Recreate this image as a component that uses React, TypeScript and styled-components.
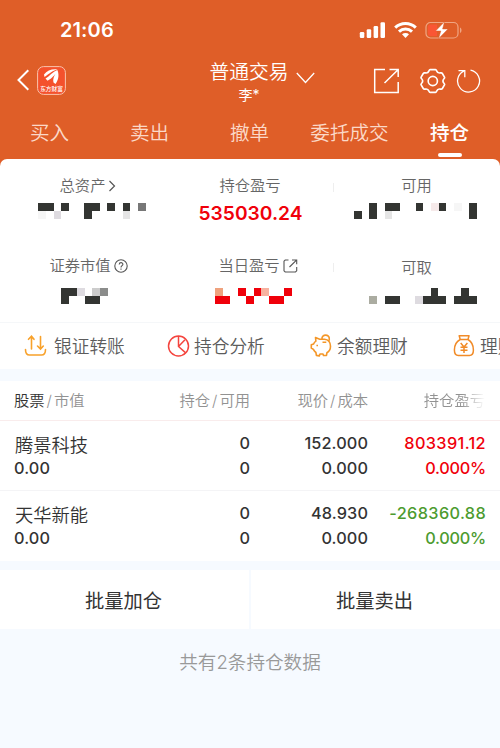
import React from 'react';
import styled, { createGlobalStyle } from 'styled-components';

const GlobalStyle = createGlobalStyle`
  * { box-sizing: border-box; }
  body {
    margin: 0;
    background: #f6faff;
    overflow: hidden;
    font-family: Inter, "Noto Sans CJK SC", sans-serif;
    font-weight: 350;
    color: #333;
  }
`;

const Screen = styled.div`
  width: 500px;
  height: 748px;
  overflow: hidden;
  background: #f6faff;
`;

const Header = styled.header`
  height: 159px;
  background: #df5e28;
  color: #fff;
`;

const StatusBar = styled.div`
  height: 60px;
  display: flex;
  align-items: center;
  justify-content: space-between;
  padding: 0 38px 0 60px;
`;

const Clock = styled.span`
  font-size: 20px;
  font-weight: 600;
  line-height: 24px;
  letter-spacing: 0.1px;
`;

const StatusIcons = styled.div`
  display: flex;
  align-items: center;
  gap: 8px;
  padding-bottom: 1px;
`;

const NavBar = styled.div`
  height: 50px;
  display: grid;
  grid-template-columns: 150px 1fr 150px;
`;

const NavLeft = styled.div`
  display: flex;
  align-items: center;
  gap: 8px;
  padding: 0 0 10px 17px;
`;

const Logo = styled.svg`
  width: 29px;
  height: 29px;
`;

const TitleBlock = styled.div`
  display: flex;
  justify-content: center;
  gap: 7px;
`;

const Title = styled.div`
  text-align: center;
  margin-left: 24px;
  font-size: 19.8px;
  line-height: 24px;
`;

const Account = styled.div`
  font-size: 14px;
  line-height: 22px;
  font-weight: 400;
`;

const TitleArrow = styled.svg`
  margin-top: 12px;
`;

const NavRight = styled.div`
  display: flex;
  align-items: center;
  padding: 0 0 8px 23px;
`;

const NavIcon = styled.svg<{ $gap?: number }>`
  flex: none;
  margin-right: ${(p) => p.$gap ?? 0}px;
`;

const Tabs = styled.nav`
  display: grid;
  grid-template-columns: repeat(5, 100px);
  height: 49px;
`;

const Tab = styled.div<{ $active?: boolean }>`
  display: flex;
  flex-direction: column;
  align-items: center;
  padding-top: 8px;
  font-size: 19.6px;
  line-height: 30px;
  white-space: nowrap;
  font-weight: ${(p) => (p.$active ? 500 : 350)};
  color: ${(p) => (p.$active ? '#fff' : '#fbd9c8')};
  text-indent: -1px;
`;

const TabMark = styled.span`
  width: 24px;
  height: 4px;
  margin-top: 5px;
  border-radius: 2px;
  background: #fff;
`;

const CardBack = styled.div`
  background: linear-gradient(#df5e28 20px, #fff 20px);
`;

const SummaryCard = styled.section`
  height: 164px;
  background: #fff;
  border-radius: 7px 7px 0 0;
  border-bottom: 1px solid #f5f7f9;
  display: grid;
  grid-template-columns: 167px 167px 166px;
  grid-template-rows: 80px 83px;
`;

const Metric = styled.div<{ $divided?: boolean; $shift?: number; $drop?: number }>`
  display: flex;
  flex-direction: column;
  padding-top: ${(p) => 16 + (p.$drop ?? 0)}px;
  padding-left: ${(p) => p.$shift ?? 0}px;
  align-items: center;
  background: ${(p) => (p.$divided ? 'linear-gradient(#eee, #eee) right 24px / 1px 9px no-repeat' : 'none')};
`;

const MetricLabel = styled.div`
  display: flex;
  align-items: center;
  gap: 3px;
  height: 22px;
  margin-left: -1px;
  font-size: 15.3px;
  line-height: 22px;
  color: #666;
`;

const MetricValue = styled.div`
  font-size: 19.2px;
  line-height: 24px;
  margin-top: 4px;
  font-weight: 600;
  color: #f0000a;
`;

const MosaicGrid = styled.div<{ $columns: number; $top: number; $shift: number }>`
  display: grid;
  flex: none;
  grid-template-columns: repeat(${(p) => p.$columns}, 7.7px);
  grid-template-rows: 8px 7.5px;
  margin-top: ${(p) => p.$top}px;
  margin-left: ${(p) => p.$shift}px;
`;

const MosaicCell = styled.span<{ $color: string }>`
  background: ${(p) => p.$color};
`;

const shades: Record<string, string> = {
  '#': '#333532',
  R: '#f0000a',
  s: '#efa27e',
  p: '#f7b2a0',
  g: '#777',
  h: '#8b8c8b',
  o: '#abaca1',
  c: '#ccc',
  d: '#dedbe0',
  e: '#e5e5e5',
  k: '#f6eaea',
  f: '#f6f6f6',
  '.': 'transparent',
};

function Mosaic({ rows, top, shift = 0 }: { rows: string[]; top: number; shift?: number }) {
  return (
    <MosaicGrid $columns={rows[0].length} $top={top} $shift={shift}>
      {rows.join('').split('').map((cell, i) => (
        <MosaicCell key={i} $color={shades[cell]} />
      ))}
    </MosaicGrid>
  );
}

const QuickActions = styled.section`
  height: 46px;
  display: flex;
  overflow: hidden;
  background: #fff;
  padding-left: 24px;
`;

const QuickAction = styled.div<{ $gap?: number }>`
  flex: 0 0 143px;
  display: flex;
  align-items: center;
  gap: ${(p) => p.$gap ?? 3}px;
  font-size: 17.7px;
  line-height: 26px;
  color: #5c5c5c;
  white-space: nowrap;
`;

const QuickLabel = styled.span`
  padding-top: 2px;
`;

const QuickIcon = styled.svg`
  width: 24px;
  height: 24px;
  flex: none;
`;

const Holdings = styled.section`
  margin-top: 12px;
  background: #fff;
`;

const HoldingsHead = styled.div`
  display: grid;
  grid-template-columns: 134px 102px 118px 117px;
  height: 40px;
  align-items: center;
  padding: 1px 14px 0 14px;
  border-bottom: 1px solid #f9ecec;
  font-size: 15.3px;
  line-height: 22px;
  color: #929292;
`;

const HeadCell = styled.div<{ $left?: boolean; $fade?: boolean }>`
  text-align: ${(p) => (p.$left ? 'left' : 'right')};
  mask-image: ${(p) => (p.$fade ? 'linear-gradient(90deg, #000 80%, transparent)' : 'none')};
`;

const Slash = styled.span`
  margin: 0 2px;
`;

const Strong = styled.span`
  color: #333;
`;

const HoldingRow = styled.div`
  display: grid;
  grid-template-columns: 134px 102px 118px 118px;
  grid-template-rows: 25px 25px;
  align-items: center;
  height: 70px;
  padding: 10px 14px 9px;
  border-bottom: 1px solid #f4f4f6;
  &:last-child { border-bottom: 0; }
`;

const StockName = styled.div`
  font-size: 18.3px;
  line-height: 25px;
  padding: 3px 0 0 1px;
`;

const Figure = styled.div<{ $left?: boolean; $tone?: 'up' | 'down'; $tracking?: number }>`
  font-size: 16.3px;
  line-height: 25px;
  font-weight: 500;
  letter-spacing: ${(p) => p.$tracking ?? 0.1}px;
  text-align: ${(p) => (p.$left ? 'left' : 'right')};
  color: ${(p) => (p.$tone === 'up' ? '#f0000a' : p.$tone === 'down' ? '#4c9b2f' : '#333')};
`;

const BatchBar = styled.section`
  margin-top: 9px;
  display: grid;
  grid-template-columns: 1fr 1fr;
  gap: 2px;
  height: 59px;
`;

const BatchButton = styled.button`
  border: 0;
  padding: 2px 2px 0 0;
  background: #fff;
  color: #333;
  font: 400 19.3px/28px Inter, "Noto Sans CJK SC", sans-serif;
`;

const Footer = styled.div`
  margin-top: 20px;
  text-align: center;
  font-size: 18.6px;
  line-height: 26px;
  color: #999;
`;

const holdings = [
  { name: '腾景科技', value: '0.00', held: '0', usable: '0', price: '152.000', cost: '0.000', profit: '803391.12', rate: '0.000%', tone: 'up' as const },
  { name: '天华新能', value: '0.00', held: '0', usable: '0', price: '48.930', cost: '0.000', profit: '-268360.88', rate: '0.000%', tone: 'down' as const },
];

export default function App() {
  return (
    <>
      <GlobalStyle />
      <Screen>
        <Header>
          <StatusBar>
            <Clock>21:06</Clock>
            <StatusIcons>
              <svg width="27" height="18" viewBox="0 0 27 18" fill="#fff">
                <rect x="0.8" y="11" width="4.5" height="6" rx="1.2" />
                <rect x="7.7" y="8.3" width="4.500" height="8.7" rx="1.2" />
                <rect x="14.6" y="5" width="4.500" height="12" rx="1.2" />
                <rect x="21.5" y="1.3" width="4.500" height="15.7" rx="1.2" />
              </svg>
              <svg width="23" height="18" viewBox="0 0 23 18" fill="none" stroke="#fff" strokeWidth="3">
                <path d="M1.2 6.6C7 1 16 1 21.8 6.6" />
                <path d="M5 10.7c3.7-3.5 9.300-3.500 13 0" />
                <path d="M11.500 17l-3.500-3.700c2-1.800 5-1.800 7 0z" fill="#fff" stroke="none" />
              </svg>
              <svg width="37" height="18" viewBox="0 0 37 18">
                <rect x="1" y="1.500" width="32" height="15.500" rx="4.500" fill="none" stroke="#f0a684" strokeWidth="1.200" />
                <path d="M5.500 3.500H12V15H5.500a2.500 2.500 0 0 1-2.500-2.500V6a2.500 2.500 0 0 1 2.500-2.500z" fill="#fa5634" />
                <path d="M35 6.500c2 .8 2 4.700 0 5.500z" fill="#f0a684" />
                <path d="M19.500.8L10.500 10h5.300l-2.300 7.700L23 8h-5.400z" fill="#fff" stroke="#df5e28" strokeWidth=".5" />
              </svg>
            </StatusIcons>
          </StatusBar>
          <NavBar>
            <NavLeft>
              <svg width="12" height="22" viewBox="0 0 12 22" fill="none" stroke="#fff" strokeWidth="2">
                <path d="M11.300 1.300L1.500 11l9.800 9.700" />
              </svg>
              <Logo viewBox="0 0 29 29">
                <rect x=".6" y=".6" width="27.800" height="27.800" rx="6" fill="#f4512c" stroke="#f9c4ad" strokeWidth="1" />
                <path d="M7 8.500C10 4.500 15 2.800 20.500 3.500 15 5 12.500 7.500 7.500 11zM8.500 12.500C13 10 15 6 20.800 3.700c-2 4.300-5 8.300-10.300 11zM16.500 16.500C15.500 12 18 8 20.700 4.500c1.800 6 .2 10-2.200 13.500z" fill="#fff" />
                <text x="14.500" y="25" textAnchor="middle" fontSize="5.700" fontWeight="500" fill="#fff">东方财富</text>
              </Logo>
            </NavLeft>
            <TitleBlock>
              <Title>
                普通交易
                <Account>李*</Account>
              </Title>
              <TitleArrow width="19" height="12" viewBox="0 0 19 12" fill="none" stroke="#fff" strokeWidth="1.300">
                <path d="M.8 1l8.700 9.500L18.200 1" />
              </TitleArrow>
            </TitleBlock>
            <NavRight>
              <NavIcon $gap={20} width="27" height="26" viewBox="0 0 27 26" fill="none" stroke="#fff" strokeWidth="1.500">
                <path d="M12 1.500H1.700v23h23.500V14M16.500 1.500h8.700V9M25 1.700L11.500 15" />
              </NavIcon>
              <NavIcon $gap={10} width="26" height="26" viewBox="0 0 27 26" fill="none" stroke="#fff" strokeWidth="1.700" strokeLinejoin="round">
                <path d="M10.500 1.200h5.600c.8 0 .9.500 1.200 1.300.7 1.800 2 2.500 3.800 2.100 1-.2 1.700-.1 2.100.6l2.200 3.700c.4.7.1 1.200-.5 1.800-1.200 1.300-1.200 3.300 0 4.600.6.6.9 1.100.5 1.800l-2.200 3.700c-.4.7-1.100.8-2.100.6-1.800-.4-3.100.3-3.800 2.100-.3.800-.4 1.300-1.200 1.300h-5.600c-.8 0-.9-.5-1.200-1.300-.7-1.800-2-2.500-3.800-2.100-1 .2-1.700.1-2.100-.6l-2.200-3.700c-.4-.7-.1-1.200.5-1.800 1.200-1.300 1.200-3.300 0-4.600-.6-.6-.9-1.100-.5-1.800l2.200-3.700c.4-.7 1.100-.8 2.100-.6 1.800.4 3.100-.3 3.800-2.100.3-.8.4-1.300 1.200-1.300z" />
                <circle cx="13.300" cy="13" r="4.800" />
              </NavIcon>
              <NavIcon width="25" height="26" viewBox="0 0 25 26" fill="none" stroke="#fff" strokeWidth="1.300">
                <path d="M14.500 2.200a11 11 0 1 1-6.700.9M2.500 2.700h6.300v6.500" />
              </NavIcon>
            </NavRight>
          </NavBar>
          <Tabs>
            <Tab>买入</Tab>
            <Tab>卖出</Tab>
            <Tab>撤单</Tab>
            <Tab>委托成交</Tab>
            <Tab $active>持仓<TabMark /></Tab>
          </Tabs>
        </Header>

        <CardBack>
          <SummaryCard>
            <Metric $shift={10}>
              <MetricLabel>
                总资产
                <svg width="8" height="12" viewBox="0 0 8 12" fill="none" stroke="#555" strokeWidth="1.200"><path d="M1.500 1l5 5-5 5" /></svg>
              </MetricLabel>
              <Mosaic top={6} shift={7} rows={['##.#..##.#.#.g', 'f.d...#....e..']} />
            </Metric>
            <Metric $divided>
              <MetricLabel>持仓盈亏</MetricLabel>
              <MetricValue>535030.24</MetricValue>
            </Metric>
            <Metric>
              <MetricLabel>可用</MetricLabel>
              <Mosaic top={6} shift={-3} rows={['..#.##..#.k#.f.#', '#.#.e..........#']} />
            </Metric>
            <Metric $shift={11}>
              <MetricLabel>
                证券市值
                <svg width="14" height="14" viewBox="0 0 14 14" fill="none" stroke="#555" strokeWidth="1.100">
                  <circle cx="7" cy="7" r="6.200" />
                  <path d="M5.200 5.500C5.200 3 9 3.100 8.900 5.400 8.800 6.700 7 6.700 7 8.400M7 9.500v1.200" />
                </svg>
              </MetricLabel>
              <Mosaic top={11} shift={-9} rows={['##d.ch', '#..##.']} />
            </Metric>
            <Metric $divided $shift={16}>
              <MetricLabel>
                当日盈亏
                <svg width="15" height="14" viewBox="0 0 15 14" fill="none" stroke="#555" strokeWidth="1.100">
                  <path d="M5.500 1H2.200L1 2.200v9.600L2.200 13h10.300l1.200-1.200V8M9 1h4.700v4.300M13.500 1.200L6.500 8" />
                </svg>
              </MetricLabel>
              <Mosaic top={11} shift={-10} rows={['s..R.Rp..R', 'RR..R..RR.']} />
            </Metric>
            <Metric $drop={2}>
              <MetricLabel>可取</MetricLabel>
              <Mosaic top={9} shift={12} rows={['........#...#.', 'o.##..d###.###']} />
            </Metric>
          </SummaryCard>
        </CardBack>

        <QuickActions>
          <QuickAction $gap={6}>
            <QuickIcon viewBox="0 0 24 24" fill="none" stroke="#f8a12a" strokeWidth="1.600" strokeLinecap="round">
              <path d="M1.500 15.500c0 4 1 5.500 4 5.500h12c3 0 4-1.500 4-5.500M7.500 15V2.500M4.500 5.300l3-3 2.500 3M16.500 2.500V15M13.500 12l3 3 2.800-3" />
            </QuickIcon>
            <QuickLabel>银证转账</QuickLabel>
          </QuickAction>
          <QuickAction>
            <QuickIcon viewBox="0 0 24 24" fill="none" stroke="#f4443e" strokeWidth="1.500">
              <circle cx="11.500" cy="12" r="10" />
              <path d="M11.500 2v10.500l7.200 6.400M11.500 12.500L18 5.700" />
            </QuickIcon>
            <QuickLabel>持仓分析</QuickLabel>
          </QuickAction>
          <QuickAction>
            <QuickIcon viewBox="0 0 24 24" fill="none" stroke="#f49729" strokeWidth="1.600" strokeLinejoin="round">
              <path d="M5.500 3.500l4.200 1.700h4.800c4 .3 6 3.500 6 7 0 3.200-1.300 5.300-3.600 6.600l-.4 2.700h-3l-.5-1.500h-3l-.7 1.900-2.900-.5-.5-2.900c-1.200-.9-2-1.900-2.500-3.100L1.300 14v-3.200l2.300-.8c.4-1.200 1-2.100 2.300-2.900z" />
              <path d="M12 5c-.6-5 7.800-5.300 7.300.2-.1 1-.5 1.700-1 2.300M12.500 8.200h3.800" />
              <path d="M7.200 10.800v1.500" />
            </QuickIcon>
            <QuickLabel>余额理财</QuickLabel>
          </QuickAction>
          <QuickAction>
            <QuickIcon viewBox="0 0 24 24" fill="none" stroke="#f18b28" strokeWidth="1.500" strokeLinejoin="round">
              <path d="M6.200 1.700h9.800L15 5.500H7.200zM7.200 5.500C2.500 8 1.400 12 1.400 16c0 4 1.300 5.500 4 5.500h11c2.700 0 4-1.500 4-5.500 0-4-1.200-8-5.400-10.500M7.700 9l3.300 4 3.400-4M7.500 13.200h7M7.500 16.200h7M11 13v6" />
            </QuickIcon>
            <QuickLabel>理财</QuickLabel>
          </QuickAction>
        </QuickActions>

        <Holdings>
          <HoldingsHead>
            <HeadCell $left><Strong>股票</Strong><Slash>/</Slash>市值</HeadCell>
            <HeadCell>持仓<Slash>/</Slash>可用</HeadCell>
            <HeadCell>现价<Slash>/</Slash>成本</HeadCell>
            <HeadCell $fade>持仓盈亏</HeadCell>
          </HoldingsHead>
          {holdings.map((h) => (
            <HoldingRow key={h.name}>
              <StockName>{h.name}</StockName>
              <Figure>{h.held}</Figure>
              <Figure>{h.price}</Figure>
              <Figure $tone={h.tone} $tracking={0.35}>{h.profit}</Figure>
              <Figure $left>{h.value}</Figure>
              <Figure>{h.usable}</Figure>
              <Figure>{h.cost}</Figure>
              <Figure $tone={h.tone} $tracking={-0.25}>{h.rate}</Figure>
            </HoldingRow>
          ))}
        </Holdings>

        <BatchBar>
          <BatchButton>批量加仓</BatchButton>
          <BatchButton>批量卖出</BatchButton>
        </BatchBar>
        <Footer>共有2条持仓数据</Footer>
      </Screen>
    </>
  );
}
